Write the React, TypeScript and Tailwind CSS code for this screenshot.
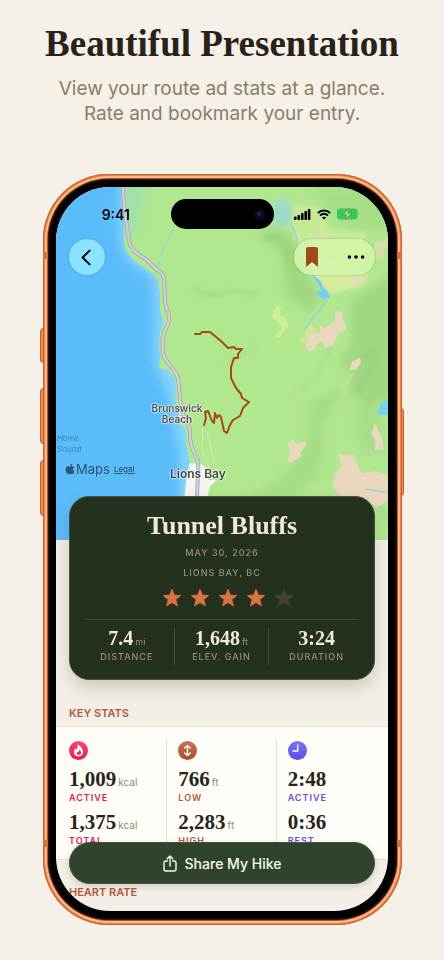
import { FaApple } from 'react-icons/fa'

const heroStats = [
    { label: 'DISTANCE', value: '7.4', unit: 'mi' },
    { label: 'ELEV. GAIN', value: '1,648', unit: 'ft' },
    { label: 'DURATION', value: '3:24', unit: '' },
]

const keyStats = [
    {
        icon: 'flame',
        color: 'text-[#d81b5c]',
        rows: [
            { value: '1,009', unit: 'kcal', label: 'ACTIVE' },
            { value: '1,375', unit: 'kcal', label: 'TOTAL' },
        ],
    },
    {
        icon: 'elevation',
        color: 'text-[#b3583a]',
        rows: [
            { value: '766', unit: 'ft', label: 'LOW' },
            { value: '2,283', unit: 'ft', label: 'HIGH' },
        ],
    },
    {
        icon: 'clock',
        color: 'text-[#5f52d6]',
        rows: [
            { value: '2:48', unit: '', label: 'ACTIVE' },
            { value: '0:36', unit: '', label: 'REST' },
        ],
    },
]

const ROAD =
    'M123 187 C123 205 127 226 129 240 C131 254 144 256 150 263 C155 270 162 270 164 278 C165 290 164 300 166 306 C170 314 170 322 166 329 C162 336 162 345 163 353 C165 363 174 367 178 378 C180 390 179 402 182 411 C184 421 191 425 190 434 C190 446 194 453 198 461 C199 472 197 484 197 500'

const TRAIL =
    'M195 334 L200 334 L202 332 L210 332 L215 336 L222 342 L228 348 L234 347 L236 349 L242 349 L238 354 L238 358 L234 358 L231 367 L231 378 L236 388 L241 394 L242 398 L249 402 L243 408 L240 416 L233 420 L230 425 L227 433 L224 431 L221 417 L219 415 L217 418 L215 413 L214 423 L212 421 L208 411 L205 412 L206 418 L204 425'

const TerrainMap = () => {
    return (
        <svg viewBox="56 187 332 353" preserveAspectRatio="xMidYMin slice" className="block h-full w-full" aria-hidden="true">
            <defs>
                <filter id="soft" x="-30%" y="-30%" width="160%" height="160%">
                    <feGaussianBlur stdDeviation="5" />
                </filter>
                <filter id="ridge" x="-30%" y="-30%" width="160%" height="160%">
                    <feGaussianBlur stdDeviation="2" />
                </filter>
                <clipPath id="land">
                    <path d="M124 180 L124 240 L126 251 L136 262 L148 270 L158 279 L160 295 L160 310 L164 322 L160 334 L159 348 L161 357 L159 368 L168 370 L175 379 L176 390 L175 400 L179 412 L181 424 L186 430 L186 442 L188 452 L190 462 L187 476 L185 490 L183 550 H400 V180 Z" />
                </clipPath>
            </defs>
            <rect x="50" y="180" width="350" height="370" fill="#5bbcfa" />
            <path d="M119 180 L119 240 L124 256 L136 268 L150 277 L153 290 L154 320 L153 362 L162 382 L170 400 L174 430 L180 450 L178 550 H400 V180 Z" fill="#84d4fc" filter="url(#soft)" />
            <g clipPath="url(#land)">
                <rect x="110" y="180" width="290" height="370" fill="#b1e78f" />
                <path d="M110 180 H148 L136 235 L110 240Z" fill="#a2e0ac" filter="url(#soft)" />
                <g fill="#98d07c" filter="url(#soft)" opacity=".7">
                    <path d="M258 232 L280 228 L298 245 L310 280 L322 300 L308 312 L287 295 L280 252Z" />
                    <path d="M350 300 L392 275 V400 L365 405 L348 392 L352 375 L338 360 L352 345Z" />
                    <path d="M310 400 L345 388 L322 425 L325 460 L300 495 L250 500 L290 470 L308 440Z" opacity=".7" />
                    <path d="M355 410 L375 400 L385 450 L362 455Z" opacity=".6" />
                    <path d="M310 187 L388 187 V232 L340 225Z" opacity=".6" />
                </g>
                <g fill="none" stroke="#92c878" strokeWidth="2.4" filter="url(#ridge)" opacity=".65">
                    <path d="M192 285 L200 293 L215 295 L240 290 L258 295" />
                    <path d="M262 240 L275 237 L284 242 L286 255 L292 270" />
                    <path d="M290 395 L310 385 L330 350 L322 335" opacity=".5" />
                    <path d="M360 358 L372 350 L378 358 L365 380 L355 392" />
                    <path d="M225 365 L235 355 L260 345" opacity=".4" />
                    <path d="M311 475 L320 480" />
                    <path d="M378 505 L388 518" />
                </g>
                <path d="M292 205 L318 206 L330 230 L365 232 L368 285 L332 294 L318 283 L302 262 L292 228Z" fill="#cdec9c" opacity=".8" filter="url(#ridge)" />
                <path d="M302 255 L345 262 L362 284 L332 294 L325 285 L314 276Z" fill="#d9ec9e" opacity=".8" />
                <path d="M277 306 L281 307 L280 315 L286 319 L288 326 L280 337 L274 337 L282 328 L278 322 L272 317 L273 311Z" fill="#d0ef93" />
                <path d="M299 340 L310 324 L318 330 L306 343Z" fill="#d3e58c" />
                <path d="M340 392 L350 374 L354 374 L345 394Z" fill="#b4e494" />
                <g fill="#e9d8bd">
                    <path d="M335 311 L342 312 L343 320 L347 329 L338 333 L333 346 L325 348 L322 341 L316 345 L315 350 L308 351 L305 346 L308 341 L305 337 L313 332 L320 333 L319 324 L324 328 L333 323 L335 320Z" />
                    <path d="M352 362 L360 357 L361 362 L356 370 L349 370Z" />
                    <path d="M375 423 L379 432 L382 437 L384 450 L375 450 L375 439 L371 434Z" />
                    <path d="M288 443 L293 440 L297 444 L306 441 L305 447 L300 453 L302 456 L290 463 L287 460 L290 454Z" />
                    <path d="M338 454 L353 455 L359 468 L362 473 L377 471 L390 477 L390 500 L377 507 L366 500 L343 500 L333 487 L335 473 L342 465Z" />
                    <path d="M375 243 L390 236 V246 L384 250 L385 258 L377 260 L373 252Z" opacity=".6" />
                    <path d="M350 280 L365 274 L364 281 L357 287 L352 285Z" opacity=".8" />
                    <path d="M315 237 L328 230 L330 240 L318 243Z" opacity=".5" />
                </g>
                <ellipse cx="282" cy="213" rx="10" ry="15" fill="#9dd9cd" filter="url(#ridge)" opacity=".9" />
                <g fill="none" stroke="#87d4e4" strokeWidth="1.3">
                    <path d="M291 223 L297 238 L298 256 L314 276" />
                    <path d="M327 299 L319 311 L311 320 L304 331" />
                    <path d="M173 229 L170 238 L164 247 L160 260 L155 275" strokeWidth="1" />
                    <path d="M365 489 L390 493" />
                </g>
                <path d="M312 275 L320 280 L323 287 L328 292 L330 298 L323 299 L317 295 L317 291 L322 291Z" fill="#74cdf5" />
                <path d="M390 400 L382 402 L377 412 L380 415 L390 415Z" fill="#72d2f8" />
                <path d="M187 463 L201 464 L209 470 L208 480 L217 480 L210 486 L207 500 H183 Z" fill="#f4f5f1" />
                <g fill="none" stroke="#cfe8bd" strokeWidth="1">
                    <path d="M203 427 L202 450 L210 470" />
                    <path d="M207 431 L210 445 L214 462" />
                </g>
                <path d="M178 405 L184 406 L182 425 L177 424Z" fill="#edf2e6" />
            </g>
            <path d={ROAD} fill="none" stroke="#a3a6b0" strokeWidth="4" />
            <path d={ROAD} fill="none" stroke="#d0d1d7" strokeWidth="2.4" />
            <path d={TRAIL} fill="none" stroke="#a9481e" strokeWidth="2" strokeLinejoin="round" strokeLinecap="round" />
        </svg>
    )
}

const StatusIcons = () => {
    return (
        <div className="flex items-center gap-[6px] text-black">
            <svg width="17" height="11" viewBox="0 0 17 11" fill="currentColor">
                <rect x="0" y="7.4" width="2.6" height="3.6" rx=".8" />
                <rect x="3.5" y="6" width="2.6" height="5" rx=".8" />
                <rect x="7" y="4" width="2.6" height="7" rx=".8" />
                <rect x="10.4" y="2" width="2.6" height="9" rx=".8" />
                <rect x="13.8" y="0" width="2.6" height="11" rx=".8" />
            </svg>
            <svg width="14" height="11" viewBox="0 0 14 11" fill="none" stroke="currentColor" strokeWidth="1.9">
                <path d="M.8 4.2 C4.2 .5 9.8 .5 13.2 4.2" />
                <path d="M3 6.6 C5.3 4.2 8.7 4.2 11 6.6" />
                <path d="M7 10.6 L4.9 8.5 C6.1 7.4 7.9 7.4 9.1 8.5Z" fill="currentColor" stroke="none" />
            </svg>
            <svg width="23" height="12" viewBox="0 0 23 12">
                <rect x="0" y=".5" width="20.5" height="11" rx="3.2" fill="#34c85a" />
                <path d="M21.3 4 Q23 6 21.3 8Z" fill="#34c85a" />
                <path d="M11.8 .4 L6 6.8 H9.6 L8.4 11.6 L14.6 5 H10.9Z" fill="#a9e08c" stroke="#6f8d55" strokeWidth=".7" />
            </svg>
        </div>
    )
}

const Star = ({ filled }: { filled: boolean }) => {
    return (
        <svg width="20" height="20" viewBox="0 0 20 20" className={filled ? 'text-[#d9733f]' : 'text-[#47432f]'}>
            <path
                d="M10 1.4 L12.3 7.2 L18.6 7.6 L13.7 11.6 L15.4 17.8 L10 14.4 L4.6 17.8 L6.3 11.6 L1.4 7.6 L7.7 7.2Z"
                fill="currentColor"
                stroke="currentColor"
                strokeWidth="1"
                strokeLinejoin="round"
            />
        </svg>
    )
}

const Badge = ({ icon }: { icon: string }) => {
    if (icon === 'flame') {
        return (
            <span className="flex size-[19px] items-center justify-center rounded-full bg-linear-to-b from-[#f8447c] to-[#e6165a]">
                <svg width="11" height="13" viewBox="0 0 11 13">
                    <path d="M4.2 .6 C7.6 1.6 10 4.8 10 8 C10 10.8 8.2 12.4 5.5 12.4 C2.8 12.4 1 10.7 1 8.3 C1 6.4 2 5.6 2.1 4.2 C3 4.5 3.6 5 3.8 5.7 C4.8 4.4 4.9 2.2 4.2 .6Z" fill="#fff" />
                    <path d="M6 5.6 C7.8 6.8 8.4 8.3 8 9.6 C7.5 11.2 4.9 11.5 4 10.1 C3.4 9.1 3.7 8.2 4.2 7.7 C4.6 8.3 5 8.5 5.3 8.4 C6 7.8 6.3 6.8 6 5.6Z" fill="#ea2464" />
                </svg>
            </span>
        )
    }
    if (icon === 'elevation') {
        return (
            <span className="flex size-[19px] items-center justify-center rounded-full bg-linear-to-b from-[#c97550] to-[#a94d2c]">
                <svg width="9" height="13" viewBox="0 0 9 13" fill="none" stroke="#fff" strokeWidth="1.4" strokeLinecap="round" strokeLinejoin="round">
                    <path d="M4.5 1.5 V11.5 M1.7 4 L4.5 1.4 L7.3 4 M1.7 9 L4.5 11.6 L7.3 9" />
                </svg>
            </span>
        )
    }
    return (
        <span className="flex size-[19px] rounded-full bg-linear-to-b from-[#7d73f6] to-[#5a4ce4]">
            <svg width="19" height="19" viewBox="0 0 19 19" fill="none" stroke="#fff" strokeWidth="1.3" strokeLinecap="round" strokeLinejoin="round">
                <path d="M9.8 4 V10 H5" />
            </svg>
        </span>
    )
}

const HikeCard = () => {
    return (
        <section className="relative mx-[13px] -mt-11 rounded-[20px] border border-[#43503d] bg-[#24311f] px-4 pt-[15px] pb-[14px] text-center shadow-[0_8px_16px_rgba(60,45,20,0.18)]">
            <h2 className="font-['Liberation_Serif',serif] text-[26px] leading-7 font-bold text-[#f0e8d8]">Tunnel Bluffs</h2>
            <p className="mt-[3px] text-[9px] leading-5 font-medium tracking-[1px] text-[#9c9075]">MAY 30, 2026</p>
            <p className="text-[9px] leading-5 font-medium tracking-[1px] text-[#9c9075]">LIONS BAY, BC</p>
            <div className="mt-[5px] flex justify-center gap-2 pl-3" role="img" aria-label="4 out of 5 stars">
                {[1, 2, 3, 4, 5].map((n) => (
                    <Star key={n} filled={n <= 4} />
                ))}
            </div>
            <div className="mt-[11px] border-t border-[#414d38] pt-2">
                <div className="-mx-[6px] grid grid-cols-3 divide-x divide-[#414d38]">
                    {heroStats.map((stat) => (
                        <div key={stat.label}>
                            <div className="flex h-[21px] items-baseline justify-center gap-[2px] leading-[21px]">
                                <span className="font-['Liberation_Serif',serif] text-[20px] font-bold text-[#f0e8d8]">{stat.value}</span>
                                {stat.unit && <span className="text-[9px] leading-3 text-[#9c9075]">{stat.unit}</span>}
                            </div>
                            <div className="text-[9px] leading-4 font-medium tracking-[1px] text-[#9c9075]">{stat.label}</div>
                        </div>
                    ))}
                </div>
            </div>
        </section>
    )
}

const KeyStats = () => {
    return (
        <section className="mt-[25px]">
            <h3 className="px-[13px] pb-[5px] text-[11px] leading-4 font-semibold text-[#b3583a]">KEY STATS</h3>
            <div className="border-y border-[#e6dfd2] bg-[#fffdf8] px-[2px] pt-3">
                <div className="grid grid-cols-3 divide-x divide-[#e6dfd2]">
                    {keyStats.map((group) => (
                        <div key={group.icon} className="pt-[2px] pb-[10px] pl-[11px]">
                            <Badge icon={group.icon} />
                            <div className="mt-2 flex flex-col gap-[5px]">
                                {group.rows.map((row) => (
                                    <div key={row.label}>
                                        <div className="flex h-[22px] items-baseline gap-[2px] leading-[22px]">
                                            <span className="font-['Liberation_Serif',serif] text-[21px] font-bold text-[#28241c]">{row.value}</span>
                                            {row.unit && <span className="text-[10px] leading-3 text-[#958a72]">{row.unit}</span>}
                                        </div>
                                        <div className={`text-[9px] leading-4 font-semibold tracking-[1px] ${group.color}`}>{row.label}</div>
                                    </div>
                                ))}
                            </div>
                        </div>
                    ))}
                </div>
            </div>
        </section>
    )
}

const MapHeader = () => {
    return (
        <header className="relative h-[353px]">
            <TerrainMap />
            <div className="absolute inset-x-0 top-0 px-[13px] pt-3">
                <div className="grid h-[30px] grid-cols-[1fr_103px_1fr] items-center">
                    <span className="pr-2 text-center text-[14px] font-semibold text-black">9:41</span>
                    <span className="flex h-[30px] items-center justify-end rounded-full bg-black pr-[9px]">
                        <span className="flex size-[11px] items-center justify-center rounded-full bg-[#0b0b1e]">
                            <span className="size-1 rounded-full bg-[#23235e]" />
                        </span>
                    </span>
                    <span className="flex justify-end pr-[15px]">
                        <StatusIcons />
                    </span>
                </div>
                <div className="mt-[10px] flex items-center justify-between">
                    <button type="button" aria-label="Back" className="flex size-9 items-center justify-center rounded-full bg-[#8be4ff] shadow-[0_0_2px_rgba(0,60,90,0.3)]">
                        <svg width="10" height="17" viewBox="0 0 10 17" fill="none" stroke="#000" strokeWidth="2" strokeLinecap="round" strokeLinejoin="round" className="mr-[2px]">
                            <path d="M8.6 1.6 L1.6 8.5 L8.6 15.4" />
                        </svg>
                    </button>
                    <div className="flex h-9 items-center justify-between rounded-full bg-[#d3f6aa]/85 pr-[10px] pl-3 shadow-[0_0_2px_rgba(60,90,20,0.45)]">
                        <button type="button" aria-label="Bookmark" className="flex">
                            <svg width="12" height="20" viewBox="0 0 12 20" fill="#a5481c">
                                <path d="M2 0 H10 Q12 0 12 2 V19 Q12 20 11 19.3 L6 15 L1 19.3 Q0 20 0 19 V2 Q0 0 2 0Z" />
                            </svg>
                        </button>
                        <button type="button" aria-label="More" className="ml-[29px] flex">
                            <svg width="18" height="4" viewBox="0 0 18 4">
                                <circle cx="2.4" cy="2" r="1.8" />
                                <circle cx="9" cy="2" r="1.8" />
                                <circle cx="15.6" cy="2" r="1.8" />
                            </svg>
                        </button>
                    </div>
                </div>
            </div>
            <span className="absolute top-[216px] left-[90px] w-[62px] text-center text-[10px] leading-[11px] font-semibold text-[#4a4f4a] [text-shadow:0_0_1px_#fff,0_0_2px_#fff,0_0_2px_#fff]">
                Brunswick Beach
            </span>
            <span className="absolute top-[279px] left-[114px] text-[12px] leading-4 font-semibold text-[#40453f] [text-shadow:0_0_1px_#fff,0_0_2px_#fff,0_0_2px_#fff]">
                Lions Bay
            </span>
            <span className="absolute top-[246px] left-px text-[8px] leading-[11px] text-[#3f86b8] italic">
                Howe
                <br />
                Sound
            </span>
            <div className="absolute top-[274px] left-2 flex items-center text-[#2b5674]">
                <FaApple className="size-3" />
                <span className="text-[13px] leading-4">Maps</span>
                <a href="#legal" className="ml-1 text-[8px] leading-4 font-medium underline">Legal</a>
            </div>
        </header>
    )
}

const PhoneFrame = ({ children }: { children: React.ReactNode }) => {
    return (
        <div className="relative mt-12 mr-[42px] ml-[43px]">
            <span className="absolute top-[154px] -left-[3px] h-[35px] w-1 rounded-l-sm border border-[#c25e2c] bg-[#ef8c55]" />
            <span className="absolute top-[214px] -left-[3px] h-[56px] w-1 rounded-l-sm border border-[#c25e2c] bg-[#ef8c55]" />
            <span className="absolute top-[286px] -left-[3px] h-[56px] w-1 rounded-l-sm border border-[#c25e2c] bg-[#ef8c55]" />
            <span className="absolute top-[234px] -right-[2px] h-[88px] w-1 rounded-r-sm border border-[#c25e2c] bg-[#ef8c55]" />
            <div className="relative rounded-[66px] bg-[#7a3413] p-[5px] shadow-[inset_0_0_0_1px_#c9642f,inset_0_0_0_2px_#e5844c,inset_0_0_0_4px_#ffb888,inset_0_0_2px_5px_#c55f2b]">
                <span className="absolute top-[78px] left-0 h-[7px] w-[5px] bg-[#d4713c]" />
                <span className="absolute top-[78px] right-0 h-[7px] w-[5px] bg-[#d4713c]" />
                <span className="absolute bottom-[78px] left-0 h-[7px] w-[5px] bg-[#d4713c]" />
                <span className="absolute right-0 bottom-[78px] h-[7px] w-[5px] bg-[#d4713c]" />
                <div className="rounded-[61px] bg-black pt-2 pr-[9px] pb-[9px] pl-2 shadow-[inset_0_0_2px_1px_#3a2318]">
                    <div className="relative overflow-hidden rounded-[54px] bg-[#f3eee6]">{children}</div>
                </div>
            </div>
        </div>
    )
}

const App = () => {
    return (
        <main className="min-h-screen bg-[#f5f0e8] pt-6 pb-[35px] font-['Inter',sans-serif]">
            <div className="text-center">
                <h1 className="font-['Liberation_Serif',serif] text-[37px] leading-10 font-bold text-[#28221a]">Beautiful Presentation</h1>
                <p className="mt-3 text-[19px] leading-[25px] text-[#8b7e64]">
                    View your route ad stats at a glance.
                    <br />
                    Rate and bookmark your entry.
                </p>
            </div>
            <PhoneFrame>
                <MapHeader />
                <HikeCard />
                <KeyStats />
                <h3 className="mt-6 px-[13px] pb-[11px] text-[11px] leading-4 font-semibold text-[#b3583a]">HEART RATE</h3>
                <button
                    type="button"
                    className="absolute inset-x-[13px] bottom-[27px] flex h-[42px] items-center justify-center gap-2 rounded-full border border-[#3f5540] bg-[#30432d] text-[14px] font-medium text-[#fbf8ef] shadow-[0_2px_6px_rgba(60,45,20,0.2)]"
                >
                    <svg width="14" height="17" viewBox="0 0 14 17" fill="none" stroke="currentColor" strokeWidth="1.4" strokeLinecap="round" strokeLinejoin="round">
                        <path d="M4.4 6 H3 Q1 6 1 8 V14 Q1 16 3 16 H11 Q13 16 13 14 V8 Q13 6 11 6 H9.6" />
                        <path d="M7 11 V1.2 M4.2 3.8 L7 1 L9.8 3.8" />
                    </svg>
                    Share My Hike
                </button>
            </PhoneFrame>
        </main>
    )
}

export default App
